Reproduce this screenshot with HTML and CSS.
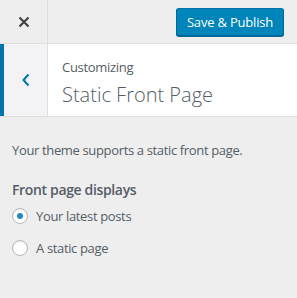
FILE: index.html
```html
<!DOCTYPE html>
<html lang="en">
<head>
    <meta charset="UTF-8">
    <title>Customize: Static Front Page</title>
    <link rel="stylesheet" href="styles.css">
</head>
<body>

<!-- Header actions -->
<div class="header-actions">
    <button class="close-button" aria-label="Close">
        <svg width="12" height="12" viewBox="0 0 12 12"><path d="M1.5 1.5 L10.5 10.5 M10.5 1.5 L1.5 10.5" stroke="#444" stroke-width="2.2" fill="none"/></svg>
    </button>
    <button class="save-button">Save &amp; Publish</button>
</div>

<!-- Section title -->
<div class="section-title">
    <button class="back-button" aria-label="Back">
        <svg width="10" height="14" viewBox="0 0 10 14"><path d="M7.5 1.5 L2.5 7 L7.5 12.5" stroke="#0073aa" stroke-width="2" fill="none"/></svg>
    </button>
    <div class="title-text">
        <span class="action">Customizing</span>
        <h3>Static Front Page</h3>
    </div>
</div>

<!-- Controls -->
<div class="controls">
    <p class="description">Your theme supports a static front page.</p>
    <div class="control-title">Front page displays</div>
    <label class="radio"><span class="radio-box checked"></span>Your latest posts</label>
    <label class="radio"><span class="radio-box"></span>A static page</label>
</div>

</body>
</html>
```

FILE: styles.css
```css
body {
    margin: 0;
    background: #eeeeee;
    font-family: "Open Sans", sans-serif;
    color: #555d66;
    font-size: 13px;
}

.header-actions {
    height: 43px;
    display: flex;
    align-items: center;
    justify-content: space-between;
    border-bottom: 1px solid #dddddd;
    background: #eeeeee;
}
.close-button {
    width: 48px;
    height: 43px;
    border: none;
    border-right: 1px solid #dddddd;
    background: transparent;
    padding: 0;
    display: flex;
    align-items: center;
    justify-content: center;
}
.save-button {
    margin-right: 13px;
    height: 28px;
    padding: 0 10px;
    font-family: "Open Sans", sans-serif;
    font-size: 13px;
    letter-spacing: -0.2px;
    color: #ffffff;
    background: #0085ba;
    border: 1px solid #0073aa;
    border-color: #0073aa #006799 #006799;
    border-radius: 3px;
    box-shadow: 0 1px 0 #006799;
}

.section-title {
    display: flex;
    height: 72px;
    background: #ffffff;
    border-bottom: 1px solid #dddddd;
}
.back-button {
    width: 48px;
    border: none;
    border-left: 4px solid #0073aa;
    border-right: 1px solid #dddddd;
    background: #f3f3f5;
    padding: 0;
    display: flex;
    align-items: center;
    justify-content: center;
}
.title-text {
    padding: 14px 14px 0 14px;
}
.action {
    display: block;
    font-size: 13px;
    line-height: 18px;
    letter-spacing: -0.3px;
}
h3 {
    margin: 7px 0 0;
    font-size: 20px;
    font-weight: 300;
    line-height: 24px;
}

.controls {
    padding: 0 12px;
    letter-spacing: -0.35px;
}
.description {
    margin: 24px 0 0;
    line-height: 18px;
}
.control-title {
    margin-top: 21px;
    font-size: 14px;
    font-weight: 600;
    line-height: 20px;
}
.radio {
    display: flex;
    align-items: center;
    height: 32px;
    line-height: 20px;
}
.radio-box {
    width: 14px;
    height: 14px;
    margin-right: 8px;
    border: 1px solid #b4b9be;
    border-radius: 50%;
    background: #ffffff;
    box-shadow: inset 0 1px 2px rgba(0, 0, 0, 0.1);
    display: flex;
    align-items: center;
    justify-content: center;
}
.radio-box.checked::before {
    content: "";
    width: 6px;
    height: 6px;
    border-radius: 50%;
    background: #1e8cbe;
}
```
